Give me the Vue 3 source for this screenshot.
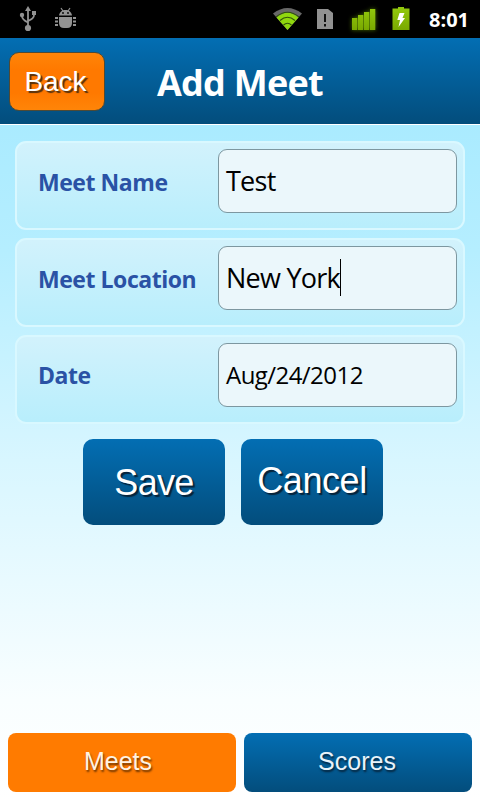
<template>
  <div class="screen">
    <div class="status-bar">
      <svg class="status-icons" width="410" height="38" viewBox="0 0 410 38">
        <!-- usb -->
        <g fill="none" stroke="#929292" stroke-width="1.8">
          <path d="M28 10V27M28 22.500C24 20.500 22 19 22 16M28 21C32 19 34 18 34 15" />
          <path d="M28 6L31 11H25Z" fill="#929292" stroke="none" />
          <circle cx="28" cy="28" r="3.1" fill="#929292" stroke="none" />
          <circle cx="22" cy="15" r="2.2" fill="#929292" stroke="none" />
          <path d="M32 11h4v4h-4z" fill="#929292" stroke="none" />
        </g>
        <!-- debug bug -->
        <g fill="#929292">
          <path d="M59 15.500C59.500 12 62 10 65.500 10S71.500 12 72 15.500Z" />
          <path d="M61 8l2 3M70 8l-2 3" stroke="#929292" stroke-width="1.2" />
          <circle cx="63" cy="13" r=".9" fill="#000" />
          <circle cx="68" cy="13" r=".9" fill="#000" />
          <path d="M59 17h13v6q0 5-5 5h-3q-5 0-5-5z" />
          <path d="M55 18h3M55 21.500h3M55 25h3M73 18h3M73 21.500h3M73 25h3" stroke="#929292" stroke-width="2" />
        </g>
        <!-- wifi -->
        <path d="M287.500 30L273 13.500Q287.500 2.500 302 13.500Z" fill="#686868" />
        <path d="M287.500 30L276.500 17.500Q287.500 8 298.500 17.500Z" fill="#90d80e" />
        <g fill="none" stroke="#31530a" stroke-width="1.1">
          <path d="M276 17Q287.500 7.500 299 17M280 20.500Q287.500 14 295 20.500M283.500 25Q287.500 21.500 291.500 25" />
        </g>
        <!-- sim alert -->
        <path d="M317 9h11l5 4v16h-16z" fill="#929292" />
        <path d="M324 14h2v8h-2zM324 24h2v2.500h-2z" fill="#111" />
        <!-- signal -->
        <g class="signal" fill="url(#green)">
          <path d="M352 18h5.300v12h-5.300zM358 15h5.300v15h-5.300zM364 12h5.300v18h-5.300zM370 9h5.300v21h-5.300z" />
        </g>
        <!-- battery -->
        <path d="M398 7h6v1.500h5.500v21.500h-17V8.500h5.500z" fill="url(#green)" />
        <path d="M399.500 13h5l-2 5h2.500l-6.500 9 1.500-7h-2.700z" fill="#fff" />
        <defs>
          <linearGradient id="green" gradientUnits="userSpaceOnUse" x1="0" y1="8" x2="0" y2="30">
            <stop offset="0" stop-color="#92c80d" />
            <stop offset="1" stop-color="#79a800" />
          </linearGradient>
        </defs>
      </svg>
      <span class="clock">8:01</span>
    </div>

    <div class="header">
      <button class="back">Back</button>
      <h1 class="title">Add Meet</h1>
    </div>

    <div class="form">
      <div class="row" v-for="item in fields" :key="item.id">
        <label class="label" :class="item.id">{{ item.label }}</label>
        <div class="field" :class="item.id">
          <span>{{ item.value }}</span>
          <i v-if="item.id === focused" class="caret"></i>
        </div>
      </div>
    </div>

    <div class="actions">
      <button class="action save">Save</button>
      <button class="action cancel">Cancel</button>
    </div>

    <div class="tabs">
      <button
        class="tab"
        v-for="tab in tabs"
        :key="tab"
        :class="{ active: tab === current }"
        @click="current = tab"
      >{{ tab }}</button>
    </div>
  </div>
</template>

<script setup>
import { ref } from 'vue'

const fields = ref([
  { id: 'name', label: 'Meet Name', value: 'Test' },
  { id: 'location', label: 'Meet Location', value: 'New York' },
  { id: 'date', label: 'Date', value: 'Aug/24/2012' }
])
const focused = ref('location')

const tabs = ['Meets', 'Scores']
const current = ref('Meets')
</script>

<style>
body {
  margin: 0;
}
</style>

<style scoped>
.screen {
  display: flex;
  flex-direction: column;
  width: 480px;
  height: 800px;
  overflow: hidden;
  background: linear-gradient(#aaebff 125px, #b5eeff 250px, #d8f6ff 460px, #f9feff 700px, #fff 800px);
  font-family: "Open Sans", "Noto Sans", sans-serif;
}
button {
  display: block;
  box-sizing: border-box;
  margin: 0;
  padding: 0;
  border: 0;
  color: #fff;
  font-family: "Liberation Sans", Arial, sans-serif;
  white-space: nowrap;
}
.status-bar {
  display: flex;
  height: 38px;
  background: #000;
}
.signal {
  filter: drop-shadow(0 0 2px #4c7300);
}
.clock {
  margin-left: 19px;
  color: #fff;
  font-size: 20px;
  font-weight: bold;
  line-height: 39px;
}
.header {
  display: flex;
  box-sizing: border-box;
  height: 87px;
  padding: 14px 0 0 9px;
  border-bottom: 1px solid #fff;
  background: linear-gradient(#036eb3, #034d7c);
}
.back {
  width: 96px;
  height: 59px;
  padding-right: 3px;
  border: 1px solid #4f4a35;
  border-radius: 10px;
  background: linear-gradient(#ff8508, #ff7900 30%, #ff7900 70%, #ff8508);
  font-size: 28px;
  line-height: 57px;
  text-shadow: 2px 2px 1px #54300c;
}
.title {
  margin: 0 0 0 52px;
  color: #fff;
  font-size: 36px;
  font-weight: bold;
  letter-spacing: -0.75px;
  line-height: 61px;
  white-space: nowrap;
}
.form {
  display: flex;
  flex-direction: column;
  gap: 8px;
  padding: 16px 15px 0;
}
.row {
  display: flex;
  box-sizing: border-box;
  height: 89px;
  padding: 6px 6px 0 21px;
  border: 2px solid #d9f8ff;
  border-radius: 11px;
  background: linear-gradient(#d2f2fc, #b8eefc);
}
.label {
  width: 180px;
  color: #2a52a5;
  font-size: 23px;
  font-weight: bold;
  letter-spacing: -0.45px;
  line-height: 67px;
  white-space: nowrap;
}
.label.date {
  line-height: 65px;
}
.field {
  display: flex;
  align-items: center;
  box-sizing: border-box;
  width: 239px;
  height: 64px;
  padding-left: 7px;
  border: 1px solid #7d97a0;
  border-radius: 9px;
  background: #ebf7fb;
  color: #000;
  font-size: 27px;
  letter-spacing: -0.75px;
  line-height: 62px;
  white-space: nowrap;
}
.field.date {
  font-size: 24px;
  letter-spacing: -0.55px;
}
.caret {
  width: 1px;
  height: 37px;
  margin-bottom: 2px;
  background: #000;
}
.actions {
  display: flex;
  gap: 16px;
  padding: 15px 0 0 83px;
}
.action {
  width: 142px;
  height: 86px;
  border-radius: 10px;
  background: linear-gradient(#036eb3, #034d7c);
  font-size: 36px;
  letter-spacing: -0.4px;
  text-shadow: 2px 2px 1px #06233a;
}
.save {
  padding-top: 2px;
  letter-spacing: -0.7px;
}
.cancel {
  padding-bottom: 2px;
}
.tabs {
  display: flex;
  gap: 8px;
  margin-top: auto;
  padding: 0 8px 8px;
}
.tab {
  width: 228px;
  height: 59px;
  padding: 0 2px 3px 0;
  border-radius: 8px;
  background: linear-gradient(#036eb3, #034d7c);
  color: #e8f3fa;
  font-size: 25px;
  line-height: 56px;
  text-shadow: 1px 2px 2px #06233a;
}
.tab.active {
  padding-right: 8px;
  background: #ff7b00;
  color: #fff3e4;
  text-shadow: 1px 2px 2px #6b3400;
}
</style>
